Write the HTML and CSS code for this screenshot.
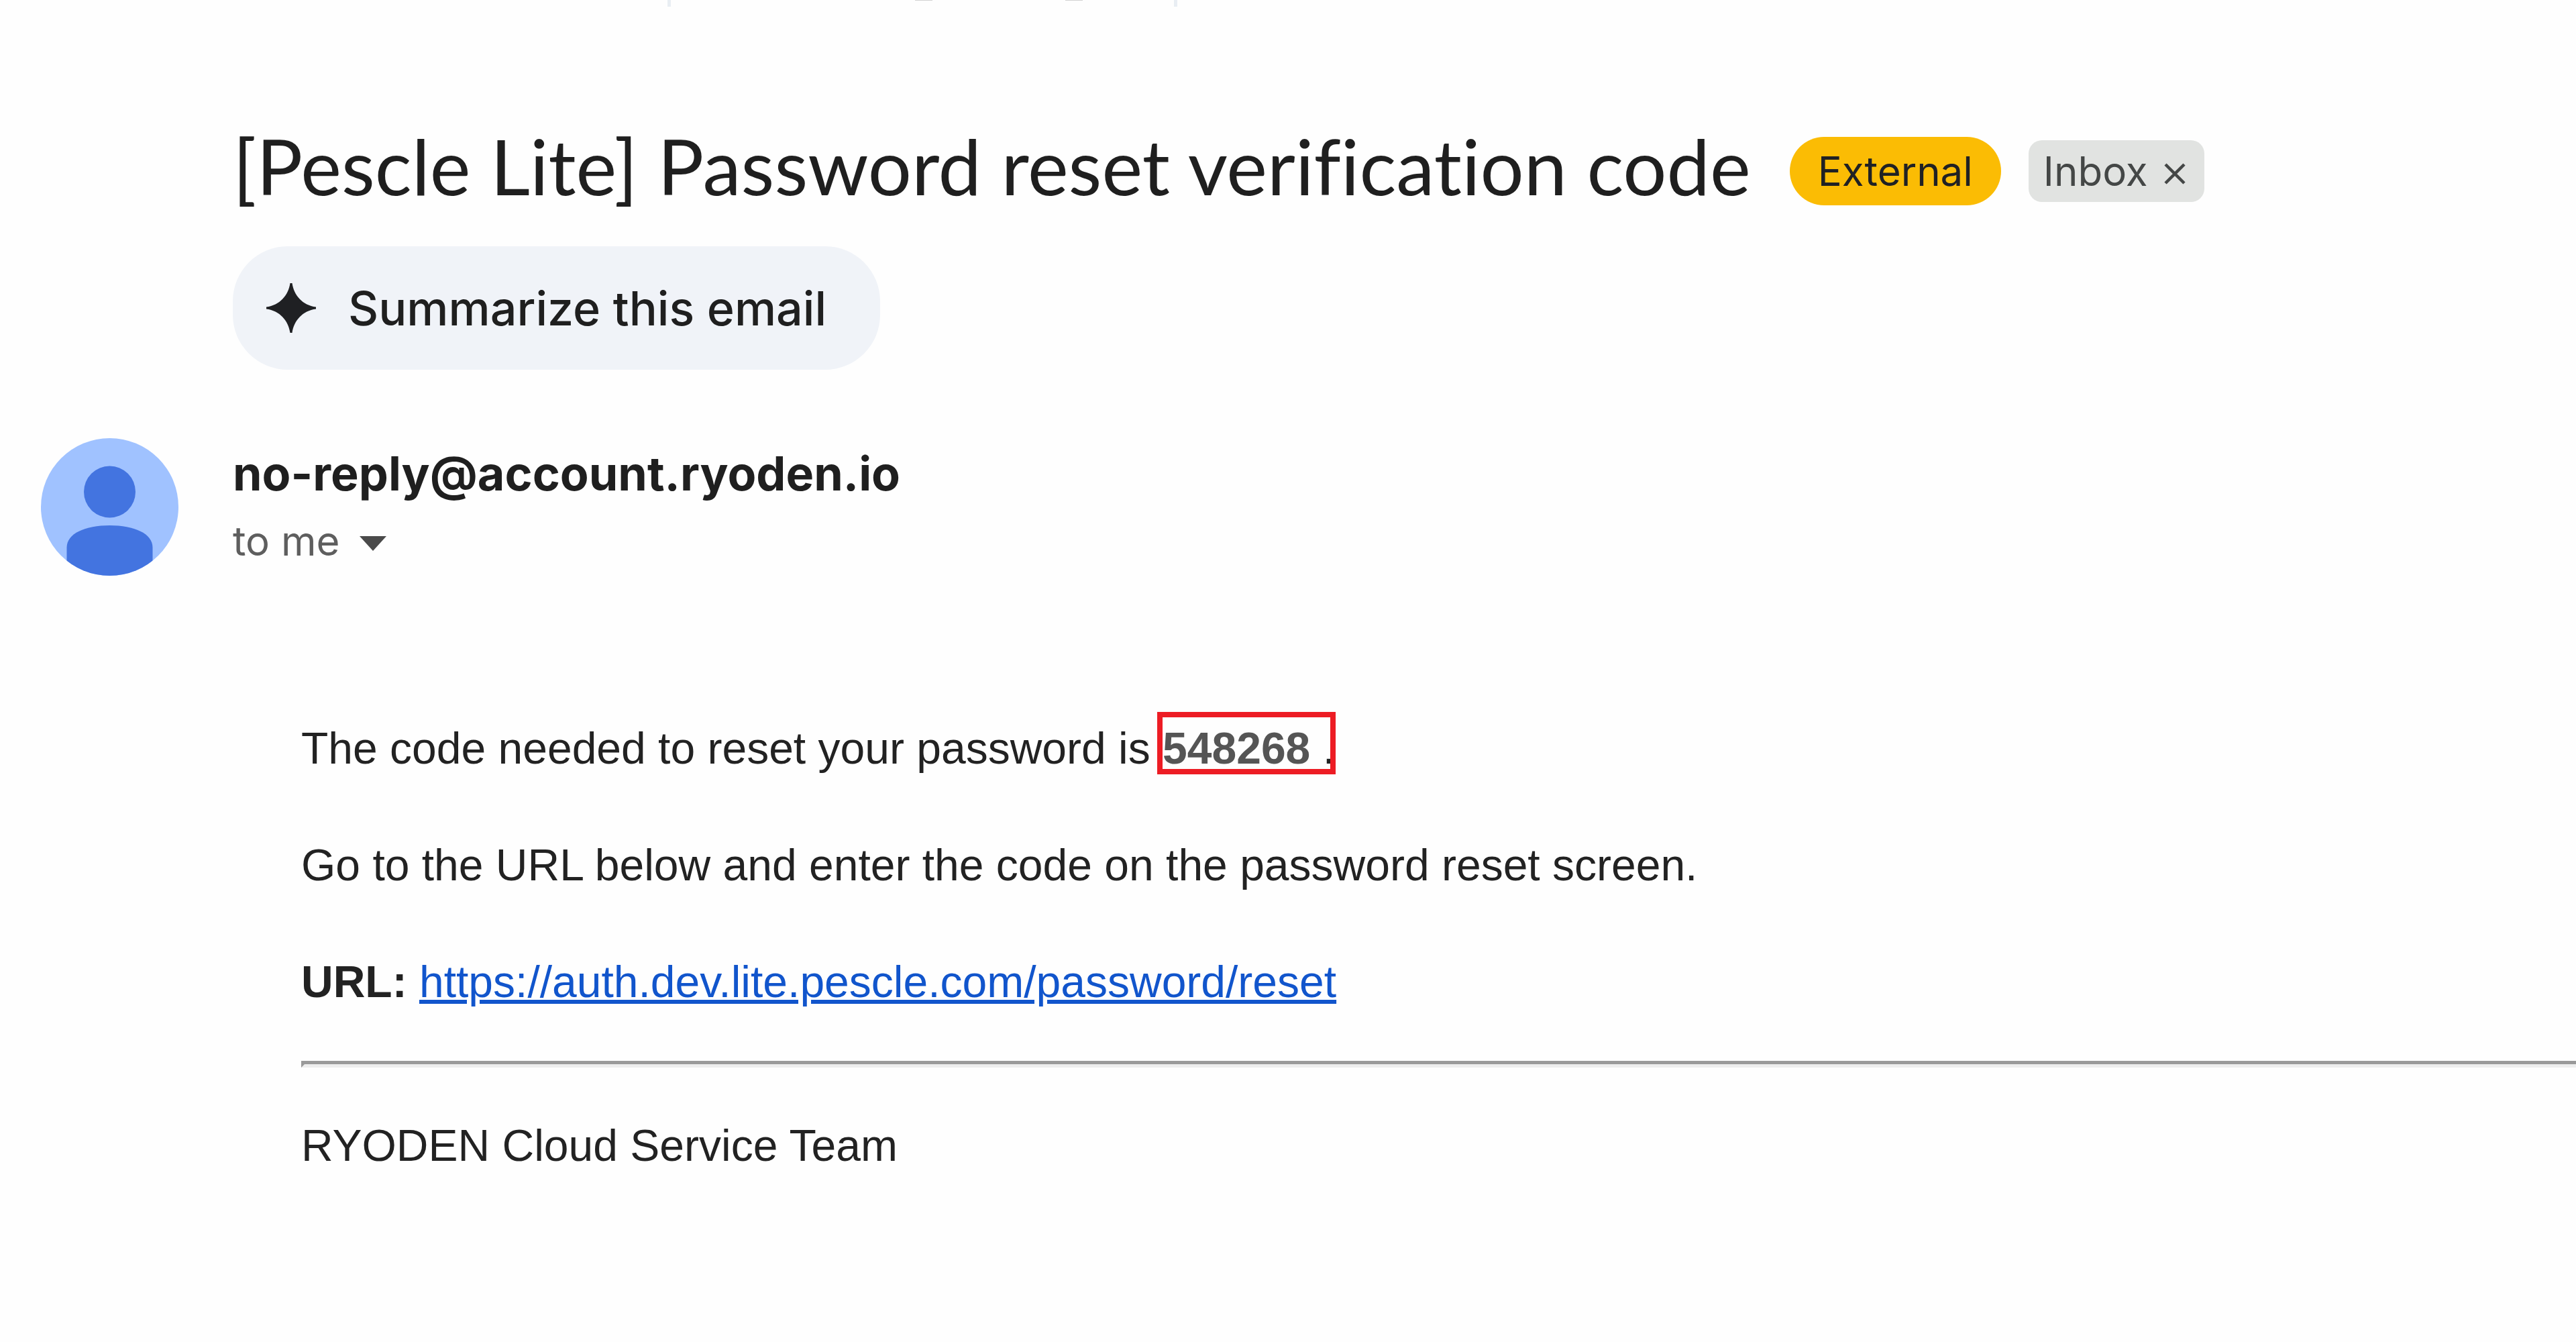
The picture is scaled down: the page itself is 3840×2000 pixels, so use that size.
FILE: index.html
```html
<!DOCTYPE html>
<html lang="en">
<head>
<meta charset="UTF-8">
<meta name="viewport" content="width=device-width, initial-scale=1.0">
<title>[Pescle Lite] Password reset verification code</title>
<link rel="stylesheet" href="styles.css">
</head>
<body>

<div class="toolbar">
  <div class="toolbar-group">
    <svg class="toolbar-icons" viewBox="0 0 250 10">
      <rect x="0" y="0" width="26" height="1" fill="#d2d2d2"/>
      <rect x="224" y="0" width="26" height="1" fill="#d2d2d2"/>
    </svg>
  </div>
</div>

<main class="mail">
  <div class="subject">
    <h1 class="subject-title">[Pescle Lite] Password reset verification code</h1>
    <span class="chip chip-external">External</span>
    <span class="chip chip-inbox">
      Inbox
      <button class="chip-close" type="button" aria-label="Remove label Inbox">
        <svg viewBox="0 0 32 40"><path d="M2 10L30 38M30 10L2 38" stroke="#444746" stroke-width="4.500" fill="none"/></svg>
      </button>
    </span>
  </div>

  <button class="summarize" type="button">
    <svg class="spark" viewBox="0 0 74 74"><path d="M35.500 0H38.500C41 18 54 33 74 35.500V38.500C54 41 41 56 38.500 74H35.500C33 56 20 41 0 38.500V35.500C20 33 33 18 35.500 0Z" fill="#1f2023"/></svg>
    Summarize this email
  </button>

  <div class="sender">
    <svg class="avatar" viewBox="0 0 205 205">
      <defs><clipPath id="round"><circle cx="102.500" cy="102.500" r="102.500"/></clipPath></defs>
      <g clip-path="url(#round)">
        <rect width="205" height="205" fill="#a0c2ff"/>
        <circle cx="102.500" cy="80" r="38.500" fill="#4374e0"/>
        <path d="M38.500 205V163C38.500 142 66 130 102.500 130S166.500 142 166.500 163V205Z" fill="#4374e0"/>
      </g>
    </svg>
    <div class="sender-info">
      <div class="sender-name">no-reply@account.ryoden.io</div>
      <button class="sender-to" type="button">
        to me
        <svg class="caret" viewBox="0 0 40 32"><path d="M0 9H40L20 31Z" fill="#4a4a4a"/></svg>
      </button>
    </div>
  </div>

  <div class="message">
    <p>The code needed to reset your password is <span class="code"><strong>548268</strong><span class="code-box"></span></span> .</p>
    <p>Go to the URL below and enter the code on the password reset screen.</p>
    <p><b>URL:</b> <a href="https://auth.dev.lite.pescle.com/password/reset">https://auth.dev.lite.pescle.com/password/reset</a></p>
    <hr>
    <p>RYODEN Cloud Service Team</p>
  </div>
</main>

</body>
</html>
```
FILE: styles.css
```css
*, *::before, *::after { box-sizing: border-box; margin: 0; padding: 0; }
body {
  background: #fefefe;
  color: #1f1f1f;
  font-family: Inter, 'Liberation Sans', sans-serif;
  overflow-x: hidden;
}
button {
  border: none;
  background: none;
  font: inherit;
  color: inherit;
  cursor: pointer;
}
svg { display: block; flex-shrink: 0; }

.toolbar { height: 10px; padding-left: 995px; }
.toolbar-group {
  width: 760px;
  height: 10px;
  padding-left: 364px;
  border-left: 5px solid #e9eef3;
  border-right: 5px solid #e9eef3;
}
.toolbar-icons { width: 250px; height: 10px; }

.mail { padding: 168px 0 120px 347px; }

.subject { display: flex; align-items: center; }
.subject-title {
  font-family: Lato, sans-serif;
  font-size: 115px;
  font-weight: 400;
  line-height: 136px;
  padding-bottom: 18px;
  margin-right: 58px;
  font-variant-ligatures: none;
  white-space: nowrap;
}
.chip {
  display: flex;
  align-items: center;
  font-size: 60px;
}
.chip-external {
  height: 102px;
  padding: 0 42px;
  margin-right: 41px;
  border-radius: 51px;
  background: #fbbc04;
  color: #202124;
}
.chip-inbox {
  height: 92px;
  padding: 0 28px 0 22px;
  gap: 24px;
  border-radius: 20px;
  background: #e1e3e1;
  color: #444746;
}
.chip-close svg { width: 32px; height: 40px; }

.summarize {
  display: flex;
  align-items: center;
  gap: 48px;
  height: 184px;
  margin-top: 35px;
  padding: 0 80px 0 50px;
  border-radius: 82px;
  background: #f0f3f8;
  font-size: 70px;
  font-weight: 500;
}
.spark { width: 74px; height: 74px; }

.sender {
  display: flex;
  align-items: center;
  gap: 81px;
  margin-top: 102px;
  margin-left: -286px;
}
.avatar { width: 205px; height: 205px; }
.sender-name { font-size: 70px; font-weight: 700; line-height: 100px; }
.sender-to {
  display: flex;
  align-items: center;
  gap: 30px;
  font-size: 60px;
  line-height: 100px;
  color: #5e5e5e;
}
.caret { width: 40px; height: 32px; }

.message {
  margin-top: 207px;
  padding-left: 102px;
  font-family: 'Liberation Sans', Arial, sans-serif;
  font-size: 66px;
  line-height: 100px;
  color: #222;
}
.message p + p { margin-top: 74px; }
.message a { color: #15c; }
.message hr {
  height: 10px;
  margin: 68px 0 66px;
  border: 5px solid;
  border-right: none;
  border-color: #9a9a9a #eee #eee #9a9a9a;
}

.code { position: relative; color: #555; }
.code-box {
  position: absolute;
  top: -17px;
  left: -8px;
  width: 266px;
  height: 93px;
  border: 8px solid #ed1c24;
}
```
